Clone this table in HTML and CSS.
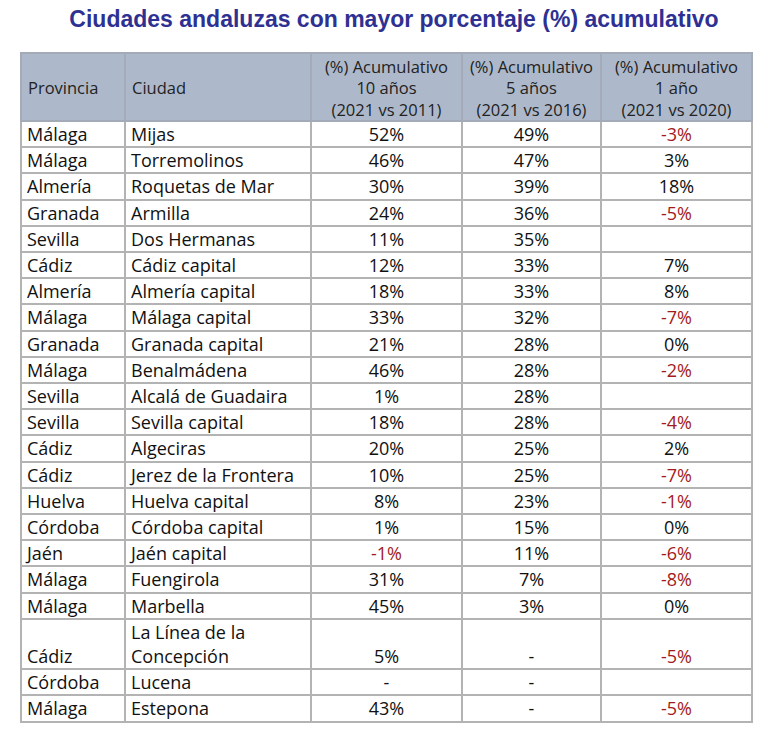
FILE: index.html
```html
<!DOCTYPE html>
<html lang="es">
<head>
<meta charset="utf-8">
<title>Ciudades andaluzas</title>
<link rel="stylesheet" href="styles.css">
</head>
<body>
<h1 class="title">Ciudades andaluzas con mayor porcentaje (%) acumulativo</h1>
<table class="data">
  <colgroup>
    <col class="c-prov"><col class="c-city"><col class="c-n1"><col class="c-n2"><col class="c-n3">
  </colgroup>
  <thead>
    <tr>
      <th class="txt">Provincia</th>
      <th class="txt">Ciudad</th>
      <th>(%) Acumulativo<br>10 años<br>(2021 vs 2011)</th>
      <th>(%) Acumulativo<br>5 años<br>(2021 vs 2016)</th>
      <th>(%) Acumulativo<br>1 año<br>(2021 vs 2020)</th>
    </tr>
  </thead>
  <tbody>
    <tr><td>Málaga</td><td>Mijas</td><td class="num">52%</td><td class="num">49%</td><td class="num neg">-3%</td></tr>
    <tr><td>Málaga</td><td>Torremolinos</td><td class="num">46%</td><td class="num">47%</td><td class="num">3%</td></tr>
    <tr><td>Almería</td><td>Roquetas de Mar</td><td class="num">30%</td><td class="num">39%</td><td class="num">18%</td></tr>
    <tr><td>Granada</td><td>Armilla</td><td class="num">24%</td><td class="num">36%</td><td class="num neg">-5%</td></tr>
    <tr><td>Sevilla</td><td>Dos Hermanas</td><td class="num">11%</td><td class="num">35%</td><td class="num"></td></tr>
    <tr><td>Cádiz</td><td>Cádiz capital</td><td class="num">12%</td><td class="num">33%</td><td class="num">7%</td></tr>
    <tr><td>Almería</td><td>Almería capital</td><td class="num">18%</td><td class="num">33%</td><td class="num">8%</td></tr>
    <tr><td>Málaga</td><td>Málaga capital</td><td class="num">33%</td><td class="num">32%</td><td class="num neg">-7%</td></tr>
    <tr><td>Granada</td><td>Granada capital</td><td class="num">21%</td><td class="num">28%</td><td class="num">0%</td></tr>
    <tr><td>Málaga</td><td>Benalmádena</td><td class="num">46%</td><td class="num">28%</td><td class="num neg">-2%</td></tr>
    <tr><td>Sevilla</td><td>Alcalá de Guadaira</td><td class="num">1%</td><td class="num">28%</td><td class="num"></td></tr>
    <tr><td>Sevilla</td><td>Sevilla capital</td><td class="num">18%</td><td class="num">28%</td><td class="num neg">-4%</td></tr>
    <tr><td>Cádiz</td><td>Algeciras</td><td class="num">20%</td><td class="num">25%</td><td class="num">2%</td></tr>
    <tr><td>Cádiz</td><td>Jerez de la Frontera</td><td class="num">10%</td><td class="num">25%</td><td class="num neg">-7%</td></tr>
    <tr><td>Huelva</td><td>Huelva capital</td><td class="num">8%</td><td class="num">23%</td><td class="num neg">-1%</td></tr>
    <tr><td>Córdoba</td><td>Córdoba capital</td><td class="num">1%</td><td class="num">15%</td><td class="num">0%</td></tr>
    <tr><td>Jaén</td><td>Jaén capital</td><td class="num neg">-1%</td><td class="num">11%</td><td class="num neg">-6%</td></tr>
    <tr><td>Málaga</td><td>Fuengirola</td><td class="num">31%</td><td class="num">7%</td><td class="num neg">-8%</td></tr>
    <tr><td>Málaga</td><td>Marbella</td><td class="num">45%</td><td class="num">3%</td><td class="num">0%</td></tr>
    <tr><td>Cádiz</td><td>La Línea de la<br>Concepción</td><td class="num">5%</td><td class="num">-</td><td class="num neg">-5%</td></tr>
    <tr><td>Córdoba</td><td>Lucena</td><td class="num">-</td><td class="num">-</td><td class="num"></td></tr>
    <tr><td>Málaga</td><td>Estepona</td><td class="num">43%</td><td class="num">-</td><td class="num neg">-5%</td></tr>
  </tbody>
</table>
</body>
</html>
```
FILE: styles.css
```css
html, body {
  margin: 0;
  padding: 0;
  background: #ffffff;
}

body {
  font-family: "Open Sans", "Liberation Sans", sans-serif;
  color: #111111;
  width: 768px;
}

.title {
  margin: 0;
  padding: 5px 0 0 20px;
  height: 46px;
  box-sizing: border-box;
  text-align: center;
  font-family: "Liberation Sans", Arial, sans-serif;
  font-weight: bold;
  font-size: 23px;
  line-height: 28px;
  color: #2e3192;
}

.data {
  margin-left: 20px;
  margin-top: 6px;
  border-collapse: collapse;
  table-layout: fixed;
  width: 731px;
}

.c-prov { width: 104px; }
.c-city { width: 186px; }
.c-n1 { width: 151px; }
.c-n2 { width: 139px; }
.c-n3 { width: 151px; }

.data th {
  background: #adb9ca;
  border: 2px solid #a3abb6;
  font-weight: normal;
  font-size: 16.5px;
  line-height: 21.3px;
  color: #222;
  height: 64px;
  padding: 2px 2px 0;
  text-align: center;
  vertical-align: middle;
}

.data th.txt {
  text-align: left;
  padding-left: 6px;
}

.data td {
  border: 2px solid #b3b3b3;
  font-size: 18px;
  line-height: 24.2px;
  height: 24.2px;
  padding: 0 5px;
  vertical-align: bottom;
  white-space: nowrap;
  color: #111;
}

.data td.num {
  text-align: center;
}

.data td.neg {
  color: #a31a1a;
}
```
